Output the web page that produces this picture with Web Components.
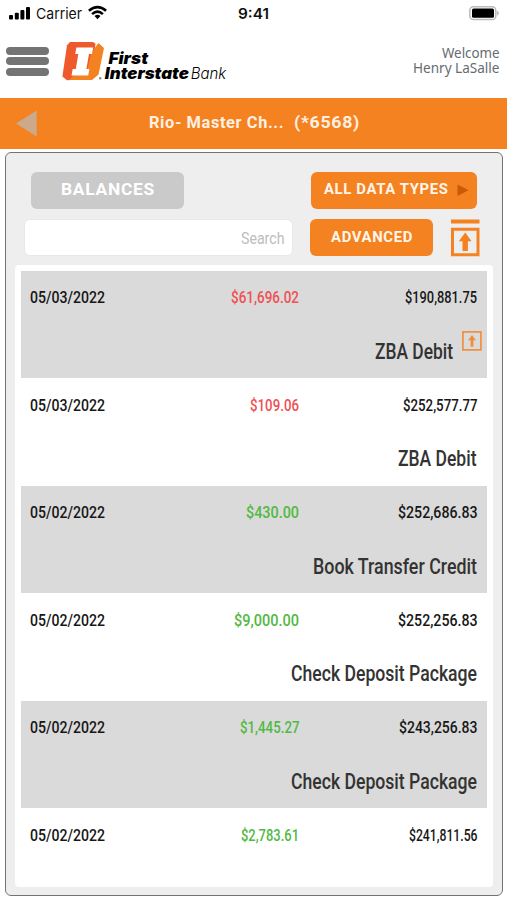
<!DOCTYPE html>
<html lang="en">
<head>
<meta charset="utf-8">
<title>First Interstate Bank</title>
<style>
html,body{margin:0;background:#fff}
body{width:507px;height:900px;overflow:hidden;font-family:Roboto,"Liberation Sans",sans-serif}
</style>
</head>
<body>
<bank-app></bank-app>
<script>
// A single line of text set to an exact width.
class FitText extends HTMLElement{
  connectedCallback(){
    const g=(n,d)=>this.getAttribute(n)||d, w=g('w'), s=+g('size','17');
    this.attachShadow({mode:'open'}).innerHTML=`<style>:host{display:block;flex:none;width:${w}px;height:${s}px}svg{display:block;overflow:visible}</style>
    <svg width="${+w+1}" height="${s*1.35}"><text x="0" y="${s}" fill="currentColor" font-family="${g('font','Roboto')}, sans-serif" font-size="${s}" font-weight="${g('weight','500')}" letter-spacing="${g('track','0')}" textLength="${w}" lengthAdjust="spacingAndGlyphs"></text></svg>`;
    this.shadowRoot.querySelector('text').textContent=this.textContent.trim();
  }
}
customElements.define('fit-text',FitText);

const define=(name,html)=>customElements.define(name,class extends HTMLElement{
  connectedCallback(){ if(!this.shadowRoot) this.attachShadow({mode:'open'}).innerHTML=html; }
});

define('status-bar',`<style>
:host{display:flex;height:28px;box-sizing:border-box;padding:0 7px 0 9px;align-items:flex-start;color:#111}
.left{display:flex;width:229px}svg{display:block}
.left fit-text{margin:3.5px 6px 0 4.5px}.time{margin-top:3.5px}.bat{margin:6px 0 0 auto}
</style>
<div class="left"><svg width="22" height="28" fill="#000"><rect x="0" y="15" width="4" height="4.5" rx="1"/><rect x="5.8" y="12.8" width="4" height="6.7" rx="1"/><rect x="11.4" y="10" width="4" height="9.5" rx="1"/><rect x="17" y="7" width="4" height="12.5" rx="1"/></svg>
<fit-text w="46" size="15" font="Inter" weight="400">Carrier</fit-text>
<svg width="19" height="28" viewBox="0 0 19 28" fill="none" stroke="#000" stroke-width="2.6"><path d="M.9 10.8Q9.5 3.4 18.1 10.8"/><path d="M4.1 14.1Q9.5 9.2 14.9 14.1"/><path d="M6.5 16.1Q9.5 13.5 12.5 16.1L9.5 19.3Z" fill="#000" stroke="none"/></svg></div>
<fit-text class="time" w="31" size="15" font="Inter" weight="600">9:41</fit-text>
<svg class="bat" width="31" height="15"><rect x=".8" y=".8" width="26" height="12.8" rx="3.6" fill="#fff" stroke="#bbb" stroke-width="1.5"/><rect x="3" y="2.6" width="22" height="9.2" rx="1.6"/><path d="M28.2 4.7Q31.4 7 28.2 9.7Z" fill="#aaa"/></svg>`);

define('bank-logo',`<style>:host{display:block}svg{display:block}</style>
<svg width="170" height="46" viewBox="60 38 170 46">
<path d="M70 42H93L95.5 43.8 91 79 67 80.2 62.4 76.5 67 45.2Z" fill="#ef5a2c"/>
<path d="M98.5 43L104 48 98.5 74.5 92 80H69L73.5 75.5H86L91 54.5 95.5 47Z" fill="#f58220"/>
<path d="M76.4 47.5H93.2L92 54H89L86.4 69H89.4L88.2 75.5H71.5L72.7 69H75.8L78.3 54H75.2Z" fill="#fff"/>
<circle cx="100.2" cy="78.3" r="1.2" fill="#888"/>
<g font-family="Inter, sans-serif" font-style="italic" font-size="16" fill="#000"><text x="108.5" y="64" font-weight="900" textLength="39.5" lengthAdjust="spacingAndGlyphs">First</text>
<text x="104.8" y="79.3" font-weight="900" textLength="84" lengthAdjust="spacingAndGlyphs">Interstate</text>
<text x="190.7" y="79.3" font-weight="300" textLength="35.5" lengthAdjust="spacingAndGlyphs">Bank</text></g></svg>`);

define('app-header',`<style>
:host{display:flex;height:69.7px;box-sizing:border-box;padding:10px 8px 0 6px;align-items:flex-start}
.menu{display:grid;gap:2.6px;margin-top:9px;width:43px}.menu i{height:7.8px;border-radius:4px;background:#747474}
bank-logo{margin-left:11px}
.user{margin-left:auto;color:#666b70;display:grid;justify-items:end;gap:.2px;margin-top:5.3px}
</style><div class="menu"><i></i><i></i><i></i></div><bank-logo></bank-logo>
<div class="user"><fit-text w="57.5" size="14.5" font="Noto Sans" weight="400">Welcome</fit-text><fit-text w="86.5" size="14.5" font="Noto Sans" weight="400">Henry LaSalle</fit-text></div>`);

define('account-bar',`<style>
:host{display:flex;height:51px;background:#f58220;box-sizing:border-box;padding:0 0 0 16px;color:#fff0e2}
svg{display:block;margin-top:12.3px}.a{margin:14.2px 0 0 111.5px}.b{margin:14.2px 0 0 10px}
</style><svg width="21" height="27"><path d="M0 13.5L20.7.5V26.5Z" fill="#cba98a"/></svg>
<fit-text class="a" w="135" size="16" weight="700" track=".6">Rio- Master Ch...</fit-text><fit-text class="b" w="66" size="16" weight="700" track=".6">(*6568)</fit-text>`);

define('pill-button',`<style>:host{display:flex;box-sizing:border-box;flex:none;border-radius:6px;background:#f58220;color:#fff6ea;height:37px}:host([muted]){background:#cacaca;color:#fff}</style><slot></slot>`);

define('tool-bar',`<style>
:host{display:grid;gap:10.5px;padding:19px 23px 0 25.5px}
div{display:flex;align-items:flex-start}svg{display:block}
.bal{width:153px;padding:6.5px 0 0 29.7px}.types{width:165.5px;margin-left:127px;padding:8.2px 0 0 12.7px}.types svg{margin:4px 0 0 8.5px}
.row{margin-left:-7px;width:470px}
.search{width:269px;height:36.5px;box-sizing:border-box;background:#fff;border-radius:6px;border:1px solid #e8e8e8;color:#bdbdbd;justify-content:flex-end;padding:6.6px 8px 0 0}
.adv{width:123px;margin-left:17px;padding:8.8px 0 0 20.7px}.up{margin-left:17.5px}
</style>
<div><pill-button class="bal" muted><fit-text w="94" size="16.7" weight="700" track=".7">BALANCES</fit-text></pill-button>
<pill-button class="types"><fit-text w="124.5" size="13.8" weight="700" track=".6">ALL DATA TYPES</fit-text><svg width="12" height="13"><path d="M.5.5L11.5 6.3.5 12Z" fill="#c85a0a"/></svg></pill-button></div>
<div class="row"><div class="search"><fit-text w="43.5" size="16.5" weight="400">Search</fit-text></div>
<pill-button class="adv"><fit-text w="82" size="13.8" weight="700" track=".6">ADVANCED</fit-text></pill-button>
<svg class="up" width="29" height="38"><g fill="#f58220"><path d="M0 .5H28.5V4.5H0Z"/><path fill-rule="evenodd" d="M0 8.8H28.5V37.3H0ZM3 11.8V34.3H25.5V11.8Z"/><path d="M14.2 13.5L20.6 22.2H16.9V32H11.5V22.2H7.8Z"/></g></svg></div>`);

// One transaction: date, signed amount, running balance and description.
customElements.define('txn-row',class extends HTMLElement{
  connectedCallback(){
    const a=n=>this.getAttribute(n);
    this.attachShadow({mode:'open'}).innerHTML=`<style>
    :host{display:block;height:107.5px;box-sizing:border-box;padding:15.6px 10.5px 0 9.5px;color:#161616}
    :host([shaded]){background:#dadada}
    .top{display:grid;grid-template-columns:75px 194px 178px;justify-items:end}
    .amt{color:#51b944}:host([debit]) .amt{color:#f04f54}
    .desc{display:flex;justify-content:flex-end;margin-top:33.3px;color:#333}
    :host([link]) .desc{margin-right:-5px}
    svg{display:block;margin:-6px 0 0 9px}</style>
    <div class="top"><fit-text w="75" size="17">${a('date')}</fit-text><fit-text class="amt" w="${a('aw')}" size="17">${a('amount')}</fit-text><fit-text w="${a('bw')}" size="17">${a('balance')}</fit-text></div>
    ${a('desc')?`<div class="desc"><fit-text w="${a('dw')}" size="21.8" weight="500">${a('desc')}</fit-text>${this.hasAttribute('link')?'<svg width="20" height="20"><rect x=".9" y=".9" width="18" height="18" fill="none" stroke="#f28b36" stroke-width="1.6"/><path d="M10 4L13.8 9.3H11.3V15.7H8.7V9.3H6.2Z" fill="#f28b36"/></svg>':''}</div>`:''}`;
  }
});

define('txn-list',`<style>:host{display:block;background:#fff;border-radius:4px;box-sizing:border-box;height:621.5px;padding:5.4px 6px 0 6px;margin:8px 9px 0 9px}</style>
<txn-row shaded debit link date="05/03/2022" amount="$61,696.02" aw="68" balance="$190,881.75" bw="72" desc="ZBA Debit" dw="78"></txn-row>
<txn-row debit date="05/03/2022" amount="$109.06" aw="49" balance="$252,577.77" bw="74.5" desc="ZBA Debit" dw="78.5"></txn-row>
<txn-row shaded date="05/02/2022" amount="$430.00" aw="53" balance="$252,686.83" bw="79.5" desc="Book Transfer Credit" dw="164"></txn-row>
<txn-row date="05/02/2022" amount="$9,000.00" aw="65" balance="$252,256.83" bw="79.5" desc="Check Deposit Package" dw="186"></txn-row>
<txn-row shaded date="05/02/2022" amount="$1,445.27" aw="59.5" balance="$243,256.83" bw="78.5" desc="Check Deposit Package" dw="186"></txn-row>
<txn-row date="05/02/2022" amount="$2,783.61" aw="58" balance="$241,811.56" bw="68.5"></txn-row>`);

define('account-panel',`<style>:host{display:block;box-sizing:border-box;margin:3.3px 4px 0 4.6px;height:744.5px;border:1.5px solid #747474;border-radius:6px;background:#eee}</style>
<tool-bar></tool-bar><txn-list></txn-list>`);

define('bank-app',`<style>:host{display:block;height:900px;width:507px;background:#fff}</style>
<status-bar></status-bar><app-header></app-header><account-bar></account-bar><account-panel></account-panel>`);
</script>
</body>
</html>
